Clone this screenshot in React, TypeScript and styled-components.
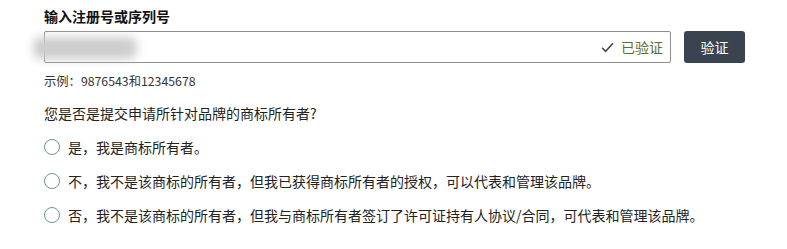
import React from "react";
import styled, { createGlobalStyle } from "styled-components";

const Global = createGlobalStyle`
  html, body { margin: 0; padding: 0; background: #fff; }
  body { font-family: "Noto Sans CJK SC", "Noto Sans", sans-serif; color: #111; }
`;

const Page = styled.div`
  padding: 7px 0 0 44px;
  display: flex;
  flex-direction: column;
`;

const Title = styled.div`
  font-size: 14px;
  font-weight: 700;
  line-height: 18px;
  color: #111;
`;

const InputRow = styled.div`
  display: flex;
  align-items: center;
  gap: 13px;
  margin-top: 6px;
`;

const InputBox = styled.div`
  position: relative;
  box-sizing: border-box;
  width: 627px;
  height: 32px;
  border: 1px solid #8d8d8d;
  border-radius: 2px;
  display: flex;
  align-items: center;
  justify-content: flex-end;
  padding-right: 7px;
`;

const Blur = styled.div`
  position: absolute;
  left: -12px;
  top: 5px;
  width: 104px;
  height: 22px;
  background: #cdcdcd;
  filter: blur(5px);
  border-radius: 8px;
`;

const Verified = styled.span`
  display: flex;
  align-items: center;
  gap: 7px;
  font-size: 14px;
  color: #5d6d32;
`;

const Button = styled.button`
  box-sizing: border-box;
  width: 61px;
  height: 32px;
  border: none;
  border-radius: 3px;
  background: #3a4350;
  color: #fff;
  font-family: inherit;
  font-size: 14px;
  padding: 0;
`;

const Hint = styled.div`
  margin-top: 10px;
  font-size: 12.3px;
  line-height: 16px;
  color: #333;
`;

const Question = styled.div`
  margin-top: 15px;
  font-size: 14px;
  line-height: 18px;
  color: #222;
`;

const Options = styled.div`
  display: flex;
  flex-direction: column;
  gap: 14px;
  margin-top: 15px;
`;

const Option = styled.label`
  display: flex;
  align-items: center;
  gap: 8px;
  height: 20px;
  font-size: 14px;
  color: #222;
`;

const Circle = styled.span`
  box-sizing: border-box;
  width: 16px;
  height: 16px;
  border-radius: 50%;
  border: 1.5px solid #6b9797;
  background: #fff;
`;

const options = [
  "是，我是商标所有者。",
  "不，我不是该商标的所有者，但我已获得商标所有者的授权，可以代表和管理该品牌。",
  "否，我不是该商标的所有者，但我与商标所有者签订了许可证持有人协议/合同，可代表和管理该品牌。",
];

export default function App() {
  return (
    <>
      <Global />
      <Page>
        <Title>输入注册号或序列号</Title>
        <InputRow>
          <InputBox>
            <Blur />
            <Verified>
              <svg width="13" height="11" viewBox="0 0 13 11" fill="none">
                <path d="M1 5.8 L4.6 9.3 L12 1.2" stroke="#444" strokeWidth="1.5" />
              </svg>
              已验证
            </Verified>
          </InputBox>
          <Button>验证</Button>
        </InputRow>
        <Hint>示例：9876543和12345678</Hint>
        <Question>您是否是提交申请所针对品牌的商标所有者?</Question>
        <Options>
          {options.map((o) => (
            <Option key={o}>
              <Circle />
              {o}
            </Option>
          ))}
        </Options>
      </Page>
    </>
  );
}
